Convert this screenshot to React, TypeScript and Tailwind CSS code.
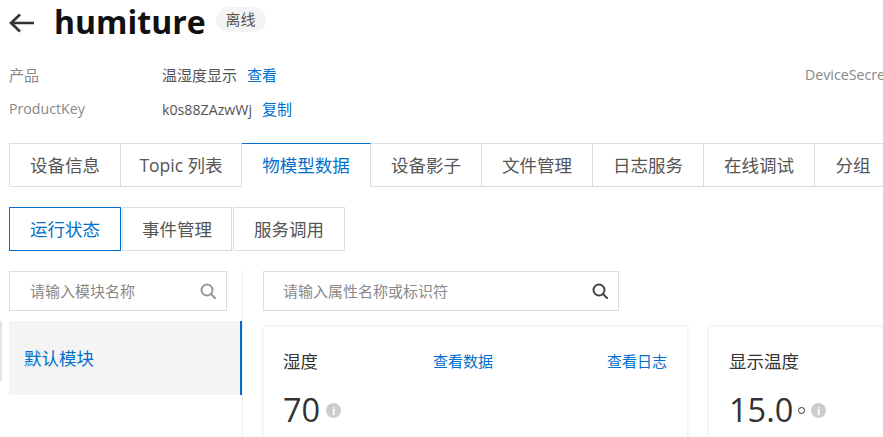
const tabs = [
  { label: "设备信息", w: "w-[112px]" },
  { label: "Topic 列表", w: "w-[121px]" },
  { label: "物模型数据", w: "w-[129px]", active: true },
  { label: "设备影子", w: "w-[111px]" },
  { label: "文件管理", w: "w-[111px]" },
  { label: "日志服务", w: "w-[111px]" },
  { label: "在线调试", w: "w-[111px]" },
  { label: "分组", w: "w-[77px]" },
];

const subTabs = ["运行状态", "事件管理", "服务调用"];

function SearchIcon({ className }: { className: string }) {
  return (
    <svg className={className} width="16" height="16" viewBox="0 0 16 16" fill="none" stroke="currentColor" strokeWidth="2">
      <circle cx="7" cy="7" r="5.5" />
      <path d="M11 11l4 4" strokeLinecap="round" />
    </svg>
  );
}

function InfoDot() {
  return (
    <span className="flex h-[15px] w-[15px] items-center justify-center rounded-full bg-[#cccccc] text-[11px] font-bold leading-none text-white">
      i
    </span>
  );
}

function PropertyCard({ title, value, unit, links, className }: { title: string; value: string; unit?: boolean; links?: boolean; className: string }) {
  return (
    <div className={`shrink-0 bg-white pt-[22px] shadow-[0_0_4px_rgba(0,0,0,0.13)] ${className}`}>
      <div className="flex items-center justify-between">
        <span className="text-[17.5px] leading-[24px] text-[#333333]">{title}</span>
        {links && (
          <div className="flex w-[234px] justify-between text-[15px] leading-[24px] text-[#0070cc]">
            <span>查看数据</span>
            <span>查看日志</span>
          </div>
        )}
      </div>
      <div className="mt-[13px] flex items-center">
        <span className="text-[32.5px] leading-[48px] text-[#333333]">{value}</span>
        {unit && <span className="ml-[5px] h-[7px] w-[7px] rounded-full border-[1.5px] border-[#333333]" />}
        <span className="ml-[6px]">
          <InfoDot />
        </span>
      </div>
    </div>
  );
}

export default function App() {
  return (
    <div className="relative h-[437px] w-[883px] overflow-hidden bg-white font-['Open_Sans','Noto_Sans_CJK_SC',sans-serif] text-[#555555]">
      {/* header */}
      <div className="flex h-[44px] items-center pl-[9px]">
        <svg width="26" height="20" viewBox="0 0 26 20" fill="none" stroke="#333333" strokeWidth="2.6" className="mt-[2px]">
          <path d="M25 10H2M11 1.5L2 10l9 8.5" />
        </svg>
        <h1 className="ml-[19px] text-[32px] font-bold leading-[44px] text-[#111111]">humiture</h1>
        <span className="ml-[10px] -mt-[6px] flex h-[25px] w-[50px] items-center justify-center rounded-full bg-[#f4f4f4] text-[15px] text-[#555555]">
          离线
        </span>
      </div>

      {/* device info */}
      <div className="mt-[14px] flex pl-[9px] text-[14.2px] leading-[34px]">
        <div className="w-[153px] shrink-0 text-[#888888]">
          <div className="text-[15px]">产品</div>
          <div>ProductKey</div>
        </div>
        <div className="w-[643px] shrink-0">
          <div className="text-[15px]">
            温湿度显示<span className="ml-[10px] text-[#0070cc]">查看</span>
          </div>
          <div>
            k0s88ZAzwWj<span className="ml-[10px] text-[15px] text-[#0070cc]">复制</span>
          </div>
        </div>
        <div className="shrink-0 text-[#888888]">DeviceSecret</div>
      </div>

      {/* main tabs */}
      <div className="mt-[16px] flex pl-[9px]">
        {tabs.map((t) => (
          <div
            key={t.label}
            className={`flex h-[44px] shrink-0 items-center justify-center border-b border-r border-t text-[17.5px] ${t.w} ${
              t.active
                ? "border-b-white border-r-[#dddddd] border-t-[#0070cc] text-[#0070cc]"
                : "border-[#dddddd] text-[#555555] first:border-l"
            }`}
          >
            {t.label}
          </div>
        ))}
      </div>

      {/* sub tabs */}
      <div className="mt-[20px] flex gap-px pl-[9px]">
        {subTabs.map((s, i) => (
          <div
            key={s}
            className={`flex h-[44px] items-center justify-center border text-[17.5px] ${i === 1 ? "w-[110px]" : "w-[112px]"} ${
              i === 0 ? "border-[#0070cc] text-[#0070cc]" : "border-[#dddddd] text-[#555555]"
            }`}
          >
            {s}
          </div>
        ))}
      </div>

      {/* content */}
      <div className="mt-[20px] flex pl-[9px]">
        <div className="w-[234px] shrink-0 border-r border-[#eeeeee]">
          <div className="flex h-[40px] w-[218px] items-center justify-between border border-[#dddddd] pl-5 pr-[10px] text-[15px] text-[#888888]">
            <span>请输入模块名称</span>
            <SearchIcon className="text-[#999999]" />
          </div>
          <div className="mt-[10px] flex h-[74px] w-[233px] items-center border-r-2 border-[#0070cc] bg-[#f4f4f4] pl-[15px] text-[17.5px] text-[#0070cc]">
            默认模块
          </div>
        </div>
        <div className="ml-5 min-w-0 flex-1">
          <div className="flex h-[40px] w-[356px] items-center justify-between border border-[#dddddd] pl-[19px] pr-[10px] text-[15px] text-[#888888]">
            <span>请输入属性名称或标识符</span>
            <SearchIcon className="text-[#444444]" />
          </div>
          <div className="ml-px mt-4 flex gap-[22px]">
            <PropertyCard title="湿度" value="70" links className="h-[120px] w-[423px] pl-[19px] pr-[20px]" />
            <PropertyCard title="显示温度" value="15.0" unit className="h-[120px] w-[424px] pl-[20px] pr-[20px]" />
          </div>
        </div>
      </div>

      {/* collapse handle */}
      <div className="absolute left-0 top-[321px] h-[60px] w-[2px] bg-[#e4e4e4]" />
    </div>
  );
}
